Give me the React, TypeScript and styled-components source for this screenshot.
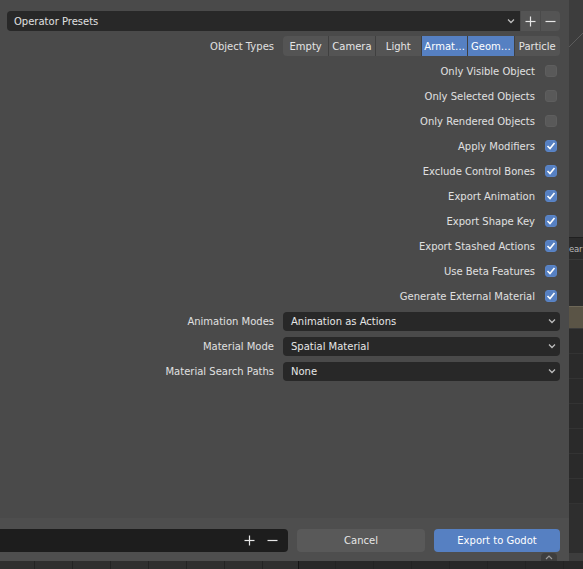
import React from "react";
import styled, { createGlobalStyle } from "styled-components";

const Global = createGlobalStyle`
  html, body { margin: 0; padding: 0; background: #2b2b2b; }
  body {
    font-family: "DejaVu Sans", "Liberation Sans", sans-serif;
    font-size: 10px;
    color: #e6e6e6;
  }
`;

const Screen = styled.div`
  width: 583px;
  height: 569px;
  display: grid;
  grid-template-columns: 569px 14px;
  grid-template-rows: 561px 8px;
  overflow: hidden;
`;

const Panel = styled.div`
  background: #4a4a4a;
  display: flex;
  flex-direction: column;
  position: relative;
`;

const Body = styled.div`
  flex: 1;
  display: flex;
  flex-direction: column;
  gap: 5px;
  padding: 11px 9px 0 7px;
`;

const PresetRow = styled.div`
  display: flex;
  height: 20px;
  gap: 1px;
`;

const PresetField = styled.div`
  flex: 1;
  background: #282828;
  border-radius: 4px 0 0 4px;
  display: flex;
  align-items: center;
  justify-content: space-between;
  padding: 0 5px 0 7px;
  color: #e0e0e0;
`;

const SmallBtn = styled.div<{ $last?: boolean }>`
  width: 19px;
  background: #545454;
  display: flex;
  align-items: center;
  justify-content: center;
  border-radius: ${(p) => (p.$last ? "0 4px 4px 0" : "0")};
`;

const PropRow = styled.div`
  display: grid;
  grid-template-columns: 267px 277px;
  column-gap: 9px;
  height: 20px;
  align-items: center;
`;

const PropLabel = styled.div`
  text-align: right;
  color: #e0e0e0;
  white-space: nowrap;
`;

const Segmented = styled.div`
  display: flex;
  height: 20px;
  border-radius: 4px;
  overflow: hidden;
`;

const Segment = styled.div<{ $on?: boolean }>`
  flex: 1;
  display: flex;
  align-items: center;
  justify-content: center;
  background: ${(p) => (p.$on ? "#5680c2" : "#545454")};
  color: ${(p) => (p.$on ? "#ffffff" : "#e6e6e6")};
  & + & { border-left: 1px solid #404040; }
  white-space: nowrap;
`;

const Dropdown = styled.div`
  height: 19px;
  background: #282828;
  border-radius: 4px;
  display: flex;
  align-items: center;
  justify-content: space-between;
  padding: 0 4px 0 8px;
  color: #e6e6e6;
`;

const CheckRow = styled.div`
  display: flex;
  justify-content: flex-end;
  align-items: center;
  gap: 10px;
  height: 20px;
  padding-right: 3px;
`;

const CheckLabel = styled.span`
  color: #e0e0e0;
  white-space: nowrap;
`;

const Box = styled.div<{ $on?: boolean }>`
  width: 12px;
  height: 12px;
  border-radius: 3px;
  box-sizing: border-box;
  background: ${(p) => (p.$on ? "#5680c2" : "#595959")};
  border: 1px solid ${(p) => (p.$on ? "#5a84c6" : "#5e5e5e")};
  display: flex;
  align-items: center;
  justify-content: center;
`;

const Footer = styled.div`
  height: 43px;
  box-sizing: border-box;
  background: #4e4e4e;
  padding-top: 11px;
  display: grid;
  grid-template-columns: 288px 128px 126px;
  column-gap: 9px;
  position: relative;
`;

const NameField = styled.div`
  height: 23px;
  background: #1d1d1d;
  border-radius: 0 4px 4px 0;
  display: flex;
  align-items: center;
  justify-content: flex-end;
  gap: 12px;
  padding-right: 10px;
`;

const FootBtn = styled.div<{ $primary?: boolean }>`
  height: 23px;
  border-radius: 4px;
  background: ${(p) => (p.$primary ? "#5680c2" : "#595959")};
  color: ${(p) => (p.$primary ? "#ffffff" : "#e6e6e6")};
  display: flex;
  align-items: center;
  justify-content: center;
  font-size: 10px;
`;

const Tab = styled.div`
  position: absolute;
  left: 541px;
  bottom: 0;
  width: 16px;
  height: 8px;
  background: #3e3e3e;
  border-radius: 4px 4px 0 0;
  display: flex;
  align-items: center;
  justify-content: center;
`;

const Side = styled.div`
  display: flex;
  flex-direction: column;
  background: #3d3d3d;
  overflow: hidden;
`;

const SideBlock = styled.div<{ $h: number; $bg: string; $line?: string }>`
  height: ${(p) => p.$h}px;
  flex: none;
  background: ${(p) => p.$bg};
  border-top: ${(p) => (p.$line ? `1px solid ${p.$line}` : "none")};
  box-sizing: border-box;
  color: #b8b8b8;
  display: flex;
  align-items: center;
  white-space: nowrap;
  overflow: hidden;
`;

const SideText = styled.span`
  font-size: 8.5px;
  letter-spacing: -0.2px;
`;

const Timeline = styled.div`
  grid-column: 1 / span 2;
  display: flex;
`;

const TimePart = styled.div<{ $w?: number; $bg: string; $offset: number }>`
  ${(p) => (p.$w ? `width: ${p.$w}px; flex: none;` : "flex: 1;")}
  background-color: ${(p) => p.$bg};
  background-image: repeating-linear-gradient(
    to right,
    transparent 0,
    transparent 37px,
    #232323 37px,
    #232323 38px
  );
  background-position: ${(p) => p.$offset}px 0;
`;

const Marker = styled.div`
  width: 1px;
  background: #141414;
  flex: none;
`;

const Chevron = ({ color = "#bdbdbd" }: { color?: string }) => (
  <svg width="8" height="6" viewBox="0 0 8 6">
    <polyline points="1,1.5 4,4.5 7,1.5" fill="none" stroke={color} strokeWidth="1.3" />
  </svg>
);

const Plus = () => (
  <svg width="11" height="11" viewBox="0 0 11 11">
    <line x1="5.5" y1="0.5" x2="5.5" y2="10.5" stroke="#e6e6e6" strokeWidth="1.2" />
    <line x1="0.5" y1="5.5" x2="10.5" y2="5.5" stroke="#e6e6e6" strokeWidth="1.2" />
  </svg>
);

const Minus = () => (
  <svg width="11" height="11" viewBox="0 0 11 11">
    <line x1="0.5" y1="5.5" x2="10.5" y2="5.5" stroke="#e6e6e6" strokeWidth="1.2" />
  </svg>
);

const Check = () => (
  <svg width="10" height="10" viewBox="0 0 10 10">
    <polyline points="1.5,5 4,7.5 8.5,2" fill="none" stroke="#ffffff" strokeWidth="1.6" />
  </svg>
);

const checks: [string, boolean][] = [
  ["Only Visible Object", false],
  ["Only Selected Objects", false],
  ["Only Rendered Objects", false],
  ["Apply Modifiers", true],
  ["Exclude Control Bones", true],
  ["Export Animation", true],
  ["Export Shape Key", true],
  ["Export Stashed Actions", true],
  ["Use Beta Features", true],
  ["Generate External Material", true],
];

const dropdowns: [string, string][] = [
  ["Animation Modes", "Animation as Actions"],
  ["Material Mode", "Spatial Material"],
  ["Material Search Paths", "None"],
];

const types: [string, boolean][] = [
  ["Empty", false],
  ["Camera", false],
  ["Light", false],
  ["Armat…", true],
  ["Geom…", true],
  ["Particle", false],
];

export default function App() {
  return (
    <>
      <Global />
      <Screen>
        <Panel>
          <Body>
            <PresetRow>
              <PresetField>
                <span>Operator Presets</span>
                <Chevron />
              </PresetField>
              <SmallBtn>
                <Plus />
              </SmallBtn>
              <SmallBtn $last>
                <Minus />
              </SmallBtn>
            </PresetRow>
            <PropRow>
              <PropLabel>Object Types</PropLabel>
              <Segmented>
                {types.map(([t, on]) => (
                  <Segment key={t} $on={on}>
                    {t}
                  </Segment>
                ))}
              </Segmented>
            </PropRow>
            {checks.map(([label, on]) => (
              <CheckRow key={label}>
                <CheckLabel>{label}</CheckLabel>
                <Box $on={on}>{on && <Check />}</Box>
              </CheckRow>
            ))}
            {dropdowns.map(([label, value]) => (
              <PropRow key={label}>
                <PropLabel>{label}</PropLabel>
                <Dropdown>
                  <span>{value}</span>
                  <Chevron />
                </Dropdown>
              </PropRow>
            ))}
          </Body>
          <Footer>
            <NameField>
              <Plus />
              <Minus />
            </NameField>
            <FootBtn>Cancel</FootBtn>
            <FootBtn $primary>Export to Godot</FootBtn>
            <Tab>
              <svg width="8" height="5" viewBox="0 0 8 5">
                <polyline points="1,4 4,1 7,4" fill="none" stroke="#9a9a9a" strokeWidth="1.2" />
              </svg>
            </Tab>
          </Footer>
        </Panel>
        <Side>
          <SideBlock $h={237} $bg="#3d3d3d">
            <svg width="14" height="237" viewBox="0 0 14 237" style={{ alignSelf: "flex-start" }}>
              <line x1="0" y1="47" x2="14" y2="33" stroke="#5c5c5c" strokeWidth="1" />
            </svg>
          </SideBlock>
          <SideBlock $h={22} $bg="#2c2c2c" $line="#202020">
            <SideText>ear</SideText>
          </SideBlock>
          <SideBlock $h={47} $bg="#2e2e2e" $line="#3a3a3a" />
          <SideBlock $h={22} $bg="#5a5446" $line="#6e6858" />
          <SideBlock $h={25} $bg="#2a2a2a" $line="#3a3a3a" />
          <SideBlock $h={25} $bg="#2a2a2a" $line="#333333" />
          <SideBlock $h={25} $bg="#2a2a2a" $line="#333333" />
          <SideBlock $h={25} $bg="#2a2a2a" $line="#333333" />
          <SideBlock $h={25} $bg="#2a2a2a" $line="#333333" />
          <SideBlock $h={25} $bg="#2a2a2a" $line="#333333" />
          <SideBlock $h={25} $bg="#2a2a2a" $line="#333333" />
          <SideBlock $h={50} $bg="#2e2e2e" $line="#333333" />
        </Side>
        <Timeline>
          <TimePart $w={298} $bg="#2f2f2f" $offset={-3} />
          <Marker />
          <TimePart $bg="#282828" $offset={-1} />
        </Timeline>
      </Screen>
    </>
  );
}
